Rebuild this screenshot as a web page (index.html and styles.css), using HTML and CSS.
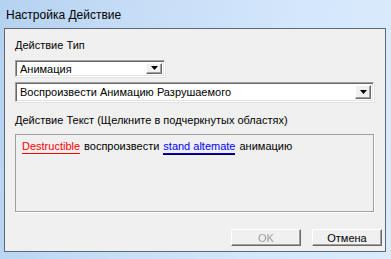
FILE: index.html
```html
<!DOCTYPE html>
<html lang="ru">
<head>
    <meta charset="UTF-8">
    <title>Настройка Действие</title>
    <link rel="stylesheet" href="styles.css">
</head>
<body>
    <div class="window">
        <div class="titlebar">Настройка Действие</div>

        <div class="client">
            <div class="section">
                <div class="label">Действие Тип</div>

                <!-- тип действия -->
                <div class="combo combo-small">
                    <span class="combo-text">Анимация</span>
                    <span class="combo-button">
                        <svg width="7" height="4" viewBox="0 0 7 4"><path d="M0 0H7L3.5 4Z" fill="#000"/></svg>
                    </span>
                </div>

                <div class="combo combo-wide">
                    <span class="combo-text">Воспроизвести Анимацию Разрушаемого</span>
                    <span class="combo-button">
                        <svg width="7" height="4" viewBox="0 0 7 4"><path d="M0 0H7L3.5 4Z" fill="#000"/></svg>
                    </span>
                </div>

                <div class="label label-text">Действие Текст (Щелкните в подчеркнутых областях)</div>

                <!-- текст действия -->
                <div class="textbox">
                    <div class="text-line">
                        <span class="link link-red">Destructible</span>
                        <span>воспроизвести</span>
                        <span class="link link-blue">stand altemate</span>
                        <span>анимацию</span>
                    </div>
                </div>
            </div>

            <div class="buttons">
                <button class="btn" disabled>OK</button>
                <button class="btn">Отмена</button>
            </div>
        </div>
    </div>
</body>
</html>
```

FILE: styles.css
```css
body {
    margin: 0;
    font-family: "Liberation Sans", Arial, sans-serif;
    font-size: 11px;
    color: #000;
    background-color: #d6e8fb;
}
.window {
    width: 391px;
    height: 259px;
    box-sizing: border-box;
    padding: 0 5px 7px 4px;
    display: flex;
    flex-direction: column;
    background: linear-gradient(100deg, #b4d2f1 0%, #c8def7 35%, #d4e7fb 70%, #dbebfc 100%);
}
.titlebar {
    height: 28px;
    line-height: 30px;
    padding-left: 2px;
    font-size: 12px;
    color: #000;
}
.client {
    flex: 1;
    border: 1px solid #5c6874;
    background-color: #f0f0f0;
    display: flex;
    flex-direction: column;
}
.section {
    padding: 9px 11px 0 10px;
}
.label {
    height: 14px;
    line-height: 14px;
}
.label-text {
    margin-top: 11px;
}
.combo {
    margin-top: 8px;
    display: flex;
    align-items: center;
    box-sizing: border-box;
    background-color: #fff;
    border-top: 1px solid #a0a0a0;
    border-left: 1px solid #a0a0a0;
    border-right: 1px solid #fff;
    border-bottom: 1px solid #fff;
    box-shadow: inset 1px 1px 0 #696969, inset -1px -1px 0 #e3e3e3, 1px 1px 0 #e3e3e3;
    padding: 2px;
}
.combo-small {
    width: 150px;
    height: 17px;
}
.combo-wide {
    margin-top: 5px;
    height: 20px;
}
.combo-text {
    flex: 1;
    padding-left: 2px;
    white-space: nowrap;
}
.combo-button {
    width: 16px;
    height: 100%;
    box-sizing: border-box;
    display: flex;
    align-items: center;
    justify-content: center;
    background-color: #f0f0f0;
    border-top: 1px solid #fff;
    border-left: 1px solid #fff;
    border-right: 1px solid #696969;
    border-bottom: 1px solid #696969;
    box-shadow: inset -1px -1px 0 #a0a0a0;
}
.combo-button svg {
    display: block;
    margin-bottom: 1px;
}
.textbox {
    margin-top: 7px;
    height: 78px;
    box-sizing: border-box;
    border: 1px solid #a0a0a0;
    box-shadow: 1px 1px 0 #fff;
    padding: 4px 6px;
}
.text-line {
    display: flex;
    gap: 4px;
    line-height: 14px;
}
.link-red {
    color: #ff0000;
    border-bottom: 1px solid #ff0000;
}
.link-blue {
    color: #0000ff;
    border-bottom: 1px solid #0000ff;
    box-shadow: 0 1px 0 #000033;
}
.buttons {
    margin-top: auto;
    padding: 0 3px 5px 0;
    display: flex;
    justify-content: flex-end;
    gap: 11px;
}
.btn {
    width: 70px;
    height: 17px;
    padding: 0;
    font-family: "Liberation Sans", Arial, sans-serif;
    font-size: 11px;
    color: #000;
    background-color: #f0f0f0;
    border-top: 1px solid #fff;
    border-left: 1px solid #fff;
    border-right: 1px solid #696969;
    border-bottom: 1px solid #696969;
    box-shadow: inset -1px -1px 0 #a0a0a0;
}
.btn:disabled {
    color: #a0a0a0;
}
```
